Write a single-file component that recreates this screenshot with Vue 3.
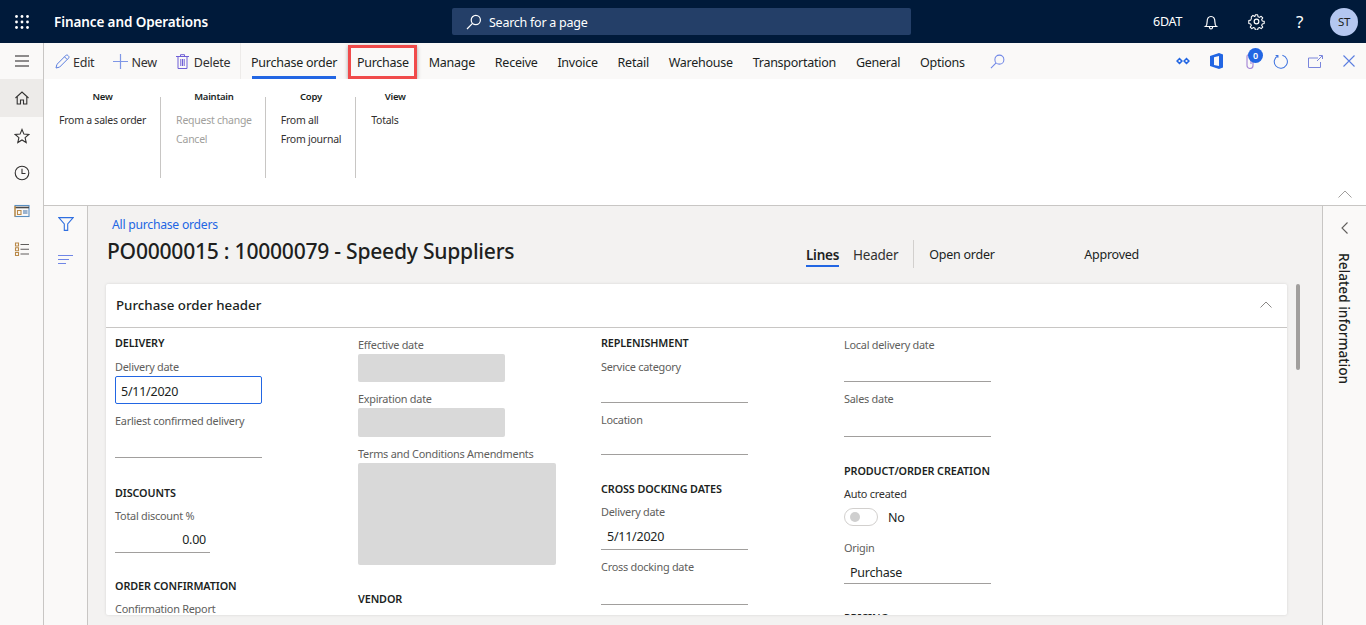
<script setup>
const navItems = ['home', 'star', 'clock', 'card', 'list'];
const tabs = ['Purchase order', 'Purchase', 'Manage', 'Receive', 'Invoice', 'Retail', 'Warehouse', 'Transportation', 'General', 'Options'];
const ribbon = [
  { title: 'New', items: [{ text: 'From a sales order' }] },
  { title: 'Maintain', items: [{ text: 'Request change', off: true }, { text: 'Cancel', off: true }] },
  { title: 'Copy', items: [{ text: 'From all' }, { text: 'From journal' }] },
  { title: 'View', items: [{ text: 'Totals' }], wide: true },
];
</script>

<template>
  <div class="shell">
    <header class="topbar">
      <svg class="waffle" width="14" height="14" viewBox="0 0 14 14" fill="#fff">
        <g v-for="y in [1.5, 7, 12.5]" :key="y">
          <circle v-for="x in [1.5, 7, 12.5]" :key="x" :cx="x" :cy="y" r="1.4" />
        </g>
      </svg>
      <span class="brand">Finance and Operations</span>
      <div class="search">
        <svg width="16" height="16" viewBox="0 0 16 16" fill="none" stroke="#fff" stroke-width="1.2">
          <circle cx="9.8" cy="6" r="4.6" />
          <path d="M6.500 9.300 1 15" />
        </svg>
        <span class="search-text">Search for a page</span>
      </div>
      <div class="top-right">
        <span class="company">6DAT</span>
        <svg class="t-bell" width="16" height="16" viewBox="0 0 16 16" fill="none" stroke="#fff" stroke-width="1.2">
          <path d="M2.500 12.500c1.400-1 1.600-2.300 1.600-4.500 0-3 1.500-5.500 3.900-5.500s3.900 2.500 3.900 5.500c0 2.200.2 3.500 1.600 4.500z" />
          <path d="M6.300 13c.2 1.300.8 2 1.700 2s1.500-.7 1.700-2" />
        </svg>
        <svg class="t-gear" width="17" height="17" viewBox="0 0 24 24" fill="none" stroke="#fff" stroke-width="1.700" stroke-linejoin="round">
          <circle cx="12" cy="12" r="3.300" />
          <path d="M10.200 1.500h3.600l.6 3 2.300 1 2.600-1.700 2.500 2.500-1.700 2.600 1 2.300 3 .6v3.400l-3 .6-1 2.300 1.700 2.600-2.500 2.500-2.600-1.700-2.300 1-.6 3h-3.600l-.6-3-2.300-1-2.600 1.700-2.500-2.500 1.700-2.600-1-2.300-3-.6V10.400l3-.6 1-2.300L3.900 4.900l2.500-2.500L9 4.100l.6-.2z" transform="translate(1.200 1.200) scale(.9)" />
        </svg>
        <span class="help">?</span>
        <span class="avatar">ST</span>
      </div>
    </header>

    <div class="main">
      <nav class="left-nav">
        <button class="nav-btn burger">
          <svg width="16" height="12" viewBox="0 0 16 12" stroke="#201f1e" stroke-width="1.200"><path d="M1 1h14M1 6h14M1 11h14" /></svg>
        </button>
        <button v-for="n in navItems" :key="n" class="nav-btn" :class="{ current: n === 'home' }">
          <svg width="16" height="16" viewBox="0 0 16 16" fill="none" stroke="#323130" stroke-width="1.100">
            <template v-if="n === 'home'">
              <path d="M1.500 8 8 2l6.500 6" /><path d="M3.200 7v7h3.300v-4h3v4h3.300V7" />
            </template>
            <path v-else-if="n === 'star'" d="m8 1.500 1.900 4.600 4.900.4-3.700 3.200 1.100 4.800L8 12l-4.200 2.500 1.100-4.800L1.200 6.500l4.900-.4z" />
            <template v-else-if="n === 'clock'">
              <circle cx="8" cy="8" r="6.800" /><path d="M8 3.800V8.500h3.500" />
            </template>
            <template v-else-if="n === 'card'">
              <rect x="1" y="2.500" width="14" height="11" stroke="#5a8fc0" />
              <path d="M1 4.500h14" stroke="#4a4a4a" stroke-width="1.600" />
              <path d="M1 3v10.500" stroke="#d9963a" stroke-width="1.300" />
              <path d="M3.500 7.500h3.500v4H3.500z" stroke="#b98a4a" /><path d="M9 8h4.500M9 10h4.500" stroke="#3b6ea5" />
            </template>
            <template v-else>
              <path d="M1.500 2h3v3h-3zM1.500 6.800h3v3h-3zM1.500 11.500h3v3h-3z" stroke="#b98a4a" />
              <path d="M6.500 3.500H15M6.500 8.300H15M6.500 13H15" stroke="#605e5c" />
            </template>
          </svg>
        </button>
      </nav>

      <div class="workspace">
        <div class="action-bar">
          <div class="actions">
            <span class="action">
              <svg width="15" height="15" viewBox="0 0 15 15" fill="none" stroke="#5a7ee0" stroke-width="1"><path d="M1 14l.9-3.600L10.800 1.500c.6-.6 1.600-.6 2.200 0l.5.5c.6.600.6 1.600 0 2.200l-8.900 8.900zM9.500 2.800l2.700 2.700" /></svg>
              <span class="action-text">Edit</span>
            </span>
            <span class="action">
              <svg width="15" height="15" viewBox="0 0 15 15" stroke="#7f97e6" stroke-width="1.200"><path d="M7.500 0v15M0 7.500h15" /></svg>
              <span class="action-text">New</span>
            </span>
            <span class="action trash">
              <svg width="13" height="15" viewBox="0 0 13 15" fill="none" stroke="#6f5fd6" stroke-width="1"><path d="M0 2.500h13M4.500 2.500V.7h4v1.800M2 2.500v12h9v-12M4.800 5v7M6.500 5v7M8.200 5v7" /></svg>
              <span class="action-text">Delete</span>
            </span>
          </div>
          <div class="tabs">
            <span v-for="t in tabs" :key="t" class="tab" :class="{ active: t === 'Purchase order', marked: t === 'Purchase' }">{{ t }}</span>
            <svg class="tab-search" width="15" height="15" viewBox="0 0 16 16" fill="none" stroke="#6f86e6" stroke-width="1.100">
              <circle cx="10" cy="6" r="4.800" /><path d="M6.500 9.500 1 15" />
            </svg>
          </div>
          <div class="bar-icons">
            <svg width="14" height="10" viewBox="0 0 14 10" fill="#2266e3"><path d="M3.500 1.500 7 5 3.500 8.500 0 5zM10.500 1.500 14 5l-3.500 3.500L7 5z" /><circle cx="3.500" cy="5" r="1.100" fill="#faf9f8" /><circle cx="10.500" cy="5" r="1.100" fill="#faf9f8" /></svg>
            <svg width="13" height="16" viewBox="0 0 13 16"><path d="M0 3 9 0l4 1.500v13L9 16l-9-3z" fill="#2266e3" /><path d="M4 4.200 9 3v10l-5-1z" fill="#faf9f8" /></svg>
            <span class="clip">
              <svg width="10" height="16" viewBox="0 0 10 16" fill="none" stroke="#a98bd8" stroke-width="1.200"><path d="M8 5v7.500a3 3 0 0 1-6 0V3.500a2 2 0 0 1 4 0V11" /></svg>
              <span class="badge">0</span>
            </span>
            <svg width="15" height="15" viewBox="0 0 16 16" fill="none" stroke="#3e73e0" stroke-width="1.100"><path d="M5.500 1.800A7 7 0 1 0 10 1.400" /><path d="M5.200 4V1.600H2.800" /></svg>
            <svg width="15" height="13" viewBox="0 0 15 13" fill="none" stroke="#7a86dc" stroke-width="1"><path d="M10 3H.5v9.500h12V7" /><path d="M9 6l5-5M11 .5h3.500V4" /></svg>
            <svg width="12" height="12" viewBox="0 0 12 12" stroke="#5a7ee0" stroke-width="1.100"><path d="M.5.500l11 11M11.500.500l-11 11" /></svg>
          </div>
        </div>

        <section class="ribbon">
          <div v-for="g in ribbon" :key="g.title" class="r-group">
            <div class="r-inner" :class="{ wide: g.wide }">
              <div class="r-title">{{ g.title }}</div>
              <div v-for="i in g.items" :key="i.text" class="r-item" :class="{ off: i.off }">{{ i.text }}</div>
            </div>
          </div>
          <svg class="r-collapse" width="14" height="8" viewBox="0 0 14 8" fill="none" stroke="#a19f9d"><path d="M.5 7.500 7 1l6.500 6.500" /></svg>
        </section>

        <div class="lower">
          <aside class="filter-rail">
            <svg width="16" height="14" viewBox="0 0 16 14" fill="none" stroke="#2f6fe0" stroke-width="1.100"><path d="M.8.600h14.400L9.700 7v6.400H6.300V7z" /></svg>
            <svg width="15" height="9" viewBox="0 0 15 9" stroke="#6f86e6" stroke-width="1.100"><path d="M0 .5h15M0 4.500h11M0 8.500h8" /></svg>
          </aside>

          <main class="content">
            <div class="page-head">
              <div class="head-left">
                <a class="crumb">All purchase orders</a>
                <h1>PO0000015 : 10000079 - Speedy Suppliers</h1>
              </div>
              <div class="head-right">
                <span class="view-tab on">Lines</span>
                <span class="view-tab hdr">Header</span>
                <span class="head-sep"></span>
                <span class="status s1">Open order</span>
                <span class="status">Approved</span>
              </div>
            </div>

            <div class="scroller">
              <article class="card">
                <div class="card-head">
                  <span>Purchase order header</span>
                  <svg width="12" height="7" viewBox="0 0 12 7" fill="none" stroke="#8a8886"><path d="M.5 6.500 6 1l5.500 5.500" /></svg>
                </div>
                <div class="form">
                  <div class="col">
                    <h3>DELIVERY</h3>
                    <div class="field"><label>Delivery date</label><div class="ctl focus">5/11/2020</div></div>
                    <div class="field"><label>Earliest confirmed delivery</label><div class="ctl line"></div></div>
                    <h3 class="gap up">DISCOUNTS</h3>
                    <div class="field"><label>Total discount %</label><div class="ctl line num">0.00</div></div>
                    <h3 class="gap down">ORDER CONFIRMATION</h3>
                    <div class="field"><label>Confirmation Report</label></div>
                  </div>
                  <div class="col top">
                    <div class="field"><label>Effective date</label><div class="ctl ro"></div></div>
                    <div class="field"><label>Expiration date</label><div class="ctl ro tall"></div></div>
                    <div class="field"><label>Terms and Conditions Amendments</label><div class="memo"></div></div>
                    <h3 class="gap">VENDOR</h3>
                  </div>
                  <div class="col">
                    <h3>REPLENISHMENT</h3>
                    <div class="field"><label>Service category</label><div class="ctl line h27"></div></div>
                    <div class="field"><label>Location</label><div class="ctl line h26"></div></div>
                    <h3 class="gap">CROSS DOCKING DATES</h3>
                    <div class="field"><label>Delivery date</label><div class="ctl line tall">5/11/2020</div></div>
                    <div class="field"><label>Cross docking date</label><div class="ctl line tall"></div></div>
                  </div>
                  <div class="col top">
                    <div class="field"><label>Local delivery date</label><div class="ctl line"></div></div>
                    <div class="field"><label>Sales date</label><div class="ctl line tall"></div></div>
                    <h3 class="gap">PRODUCT/ORDER CREATION</h3>
                    <div class="field"><label class="dark">Auto created</label>
                      <div class="toggle-row"><span class="toggle"><i></i></span><span>No</span></div>
                    </div>
                    <div class="field"><label>Origin</label><div class="ctl line value">Purchase</div></div>
                    <h3 class="gap">PRICING</h3>
                  </div>
                </div>
              </article>
              <div class="thumb"></div>
            </div>
          </main>

          <aside class="related">
            <svg width="7" height="12" viewBox="0 0 7 12" fill="none" stroke="#605e5c" stroke-width="1.100"><path d="M6.500.500 1 6l5.500 5.500" /></svg>
            <span>Related information</span>
          </aside>
        </div>
      </div>
    </div>
  </div>
</template>

<style>
html, body { margin: 0; overflow: hidden; }
</style>

<style scoped>
.shell {
  width: 1366px;
  height: 625px;
  display: flex;
  flex-direction: column;
  overflow: hidden;
  font-family: "Noto Sans", "Open Sans", sans-serif;
  color: #201f1e;
  letter-spacing: -0.25px;
}

/* top bar */
.topbar {
  height: 43px;
  flex: none;
  display: flex;
  align-items: center;
  background: #001a3a;
  color: #fff;
  padding-left: 15px;
}
.brand {
  margin-left: 25px;
  width: 398px;
  font-size: 13.5px;
  font-weight: 600;
  letter-spacing: -0.1px;
}
.search {
  width: 459px;
  height: 27px;
  display: flex;
  align-items: center;
  gap: 7px;
  padding-left: 14px;
  box-sizing: border-box;
  border-radius: 2px;
  background: #243f68;
  font-size: 12.500px;
}
.search-text { padding-top: 2px; }
.top-right {
  display: flex;
  align-items: center;
  margin-left: 242px;
  font-size: 12.500px;
}
.company { width: 50px; }
.t-bell { margin-right: 29px; }
.t-gear { margin-right: 31px; }
.help { width: 34px; font-size: 17px; }
.avatar {
  width: 28px;
  height: 28px;
  border-radius: 50%;
  background: #b4c7f0;
  color: #201f1e;
  display: flex;
  align-items: center;
  justify-content: center;
  font-size: 11.500px;
}

.main { flex: 1; display: flex; min-height: 0; }

/* left nav */
.left-nav {
  width: 43px;
  flex: none;
  background: #faf9f8;
  border-right: 1px solid #c8c6c4;
}
.nav-btn {
  display: flex;
  align-items: center;
  justify-content: center;
  width: 43px;
  height: 37.800px;
  padding: 0;
  border: 0;
  background: none;
}
.burger { height: 36px; }
.nav-btn.current { background: #edebe9; }

.workspace { flex: 1; min-width: 0; display: flex; flex-direction: column; }

/* action bar */
.action-bar {
  height: 36px;
  flex: none;
  display: flex;
  align-items: center;
  background: #faf9f8;
  font-size: 12.500px;
}
.actions {
  width: 197px;
  height: 36px;
  flex: none;
  display: flex;
  align-items: center;
  gap: 19px;
  padding-left: 11px;
  box-sizing: border-box;
  border-right: 1px solid #edebe9;
}
.action { display: flex; align-items: center; gap: 3px; color: #323130; }
.action-text { padding-top: 3px; }
.trash { gap: 5px; }
.tabs {
  display: flex;
  align-items: center;
  height: 36px;
  margin-left: 10px;
  gap: 19.800px;
}
.tab {
  position: relative;
  height: 36px;
  line-height: 40px;
  white-space: nowrap;
}
.tab.active::after {
  content: "";
  position: absolute;
  left: 1px;
  right: 1px;
  bottom: 0;
  height: 3px;
  background: #2266e3;
}
.tab.marked::after {
  content: "";
  position: absolute;
  inset: 2px -8px 0 -9px;
  border: 3px solid #f04b4b;
  box-shadow: 0 1px 4px rgba(0, 0, 0, 0.35);
}
.tab-search { margin-left: 5px; }
.bar-icons {
  margin-left: auto;
  display: flex;
  align-items: center;
  justify-content: space-between;
  width: 179px;
  margin-right: 11px;
}
.clip { position: relative; display: flex; left: 2px; }
.badge {
  position: absolute;
  left: 3px;
  top: -5px;
  width: 15px;
  height: 15px;
  border-radius: 50%;
  background: #2266e3;
  color: #fff;
  font-size: 9px;
  font-weight: 600;
  text-align: center;
  line-height: 15px;
}

/* ribbon */
.ribbon {
  position: relative;
  height: 127px;
  flex: none;
  box-sizing: border-box;
  display: flex;
  align-items: flex-start;
  background: #fff;
  border-bottom: 1px solid #c8c6c4;
  padding-top: 18px;
  font-size: 10.500px;
}
.r-group {
  height: 81px;
  padding: 0 14px 0 15px;
  border-right: 1px solid #c8c6c4;
}
.r-group:nth-child(2) { padding-right: 13px; }
.r-group:last-of-type { border-right: 0; }
.r-inner.wide { width: 48px; }
.r-title {
  margin-top: -7px;
  text-align: center;
  font-weight: 600;
  font-size: 9.500px;
  line-height: 13px;
  margin-bottom: 7.500px;
}
.r-item {
  line-height: 19px;
  color: #323130;
  white-space: nowrap;
}
.r-item.off { color: #a19f9d; }
.r-collapse { position: absolute; right: 14px; bottom: 7px; }

/* lower */
.lower { flex: 1; min-height: 0; display: flex; }
.filter-rail {
  width: 43px;
  flex: none;
  background: #faf9f8;
  border-right: 1px solid #c8c6c4;
  display: flex;
  flex-direction: column;
  align-items: center;
  gap: 24px;
  padding-top: 11px;
}
.content {
  flex: 1;
  min-width: 0;
  display: flex;
  flex-direction: column;
  background: #f3f2f1;
}
.page-head {
  height: 78px;
  flex: none;
  display: flex;
}
.head-left { padding-left: 19px; width: 718px; flex: none; box-sizing: border-box; }
.crumb {
  display: block;
  margin: 10px 0 0 5px;
  font-size: 12.200px;
  line-height: 17px;
  color: #2266e3;
}
h1 {
  margin: 3px 0 0;
  font-size: 21.100px;
  font-weight: 500;
  line-height: 30px;
  white-space: nowrap;
}
.head-right {
  display: flex;
  align-items: center;
  height: 28px;
  margin-top: 34px;
  font-size: 13px;
}
.view-tab { position: relative; margin-right: 14px; font-size: 13.500px; color: #323130; padding-top: 2px; }
.view-tab.hdr { margin-right: 15px; }
.view-tab.on { font-weight: 600; color: #201f1e; }
.view-tab.on::after {
  content: "";
  position: absolute;
  left: 0;
  right: 0;
  bottom: -3px;
  height: 2px;
  background: #2266e3;
}
.head-sep { width: 1px; height: 28px; background: #d2d0ce; margin-right: 15px; }
.status { font-size: 12.500px; }
.s1 { width: 155px; }

.scroller {
  flex: 1;
  min-height: 0;
  display: flex;
  padding: 0 22px 10px 18px;
  gap: 9px;
}
.card {
  flex: 1;
  min-width: 0;
  background: #fff;
  border-radius: 2px;
  box-shadow: 0 0 3px rgba(0, 0, 0, 0.12);
  overflow: hidden;
}
.card-head {
  height: 44px;
  box-sizing: border-box;
  display: flex;
  align-items: center;
  justify-content: space-between;
  padding: 0 15px 2px 10px;
  border-bottom: 1px solid #c8c6c4;
  font-size: 13.300px;
  letter-spacing: 0;
  font-weight: 500;
}
.form {
  display: grid;
  grid-template-columns: repeat(4, 243px);
  padding: 6px 0 0 9px;
  font-size: 12.500px;
}
.col.top { padding-top: 2px; }
h3 {
  margin: 0 0 6px;
  font-size: 10.800px;
  font-weight: 600;
  line-height: 18px;
  letter-spacing: -0.1px;
}
h3.gap { margin-top: 25px; margin-bottom: 5px; }
h3.gap.up { margin-top: 26px; }
h3.gap.down { margin-top: 24px; }
.field { margin-bottom: 8px; }
.field label {
  display: block;
  font-size: 10.900px;
  line-height: 18px;
  color: #605e5c;
  white-space: nowrap;
}
.field label.dark { color: #323130; }
.ctl {
  width: 147px;
  height: 28px;
  box-sizing: border-box;
  line-height: 29px;
  padding: 0 6px;
}
.ctl.tall { height: 29px; line-height: 31px; }
.ctl.h27 { height: 27px; }
.ctl.h26 { height: 26px; }
.ctl.value { height: 27px; line-height: 31px; }
.ctl.focus { border: 1px solid #2266e3; border-radius: 2px; padding: 0 5px; }
.ctl.line { border-bottom: 1px solid #a19f9d; }
.ctl.num { width: 95px; text-align: right; padding-right: 4px; }
.ctl.ro { background: #d9d9d9; border-radius: 2px; }
.memo { width: 198px; height: 102px; background: #d9d9d9; border-radius: 2px; }
.toggle-row { display: flex; align-items: center; gap: 10px; height: 28px; }
.toggle {
  width: 34px;
  height: 18px;
  box-sizing: border-box;
  border: 1px solid #d2d0ce;
  border-radius: 9px;
  display: flex;
  align-items: center;
  padding-left: 5px;
}
.toggle i { width: 10px; height: 10px; border-radius: 50%; background: #cfcfcf; }

.thumb {
  width: 4px;
  height: 86px;
  flex: none;
  border-radius: 2px;
  background: #a19f9d;
}

/* related */
.related {
  width: 44px;
  flex: none;
  border-left: 1px solid #c8c6c4;
  background: #faf9f8;
  display: flex;
  flex-direction: column;
  align-items: center;
  padding-top: 16px;
  gap: 19px;
  box-sizing: border-box;
  font-size: 13.700px;
}
.related span { writing-mode: vertical-rl; white-space: nowrap; font-weight: 500; letter-spacing: 0; }
</style>
